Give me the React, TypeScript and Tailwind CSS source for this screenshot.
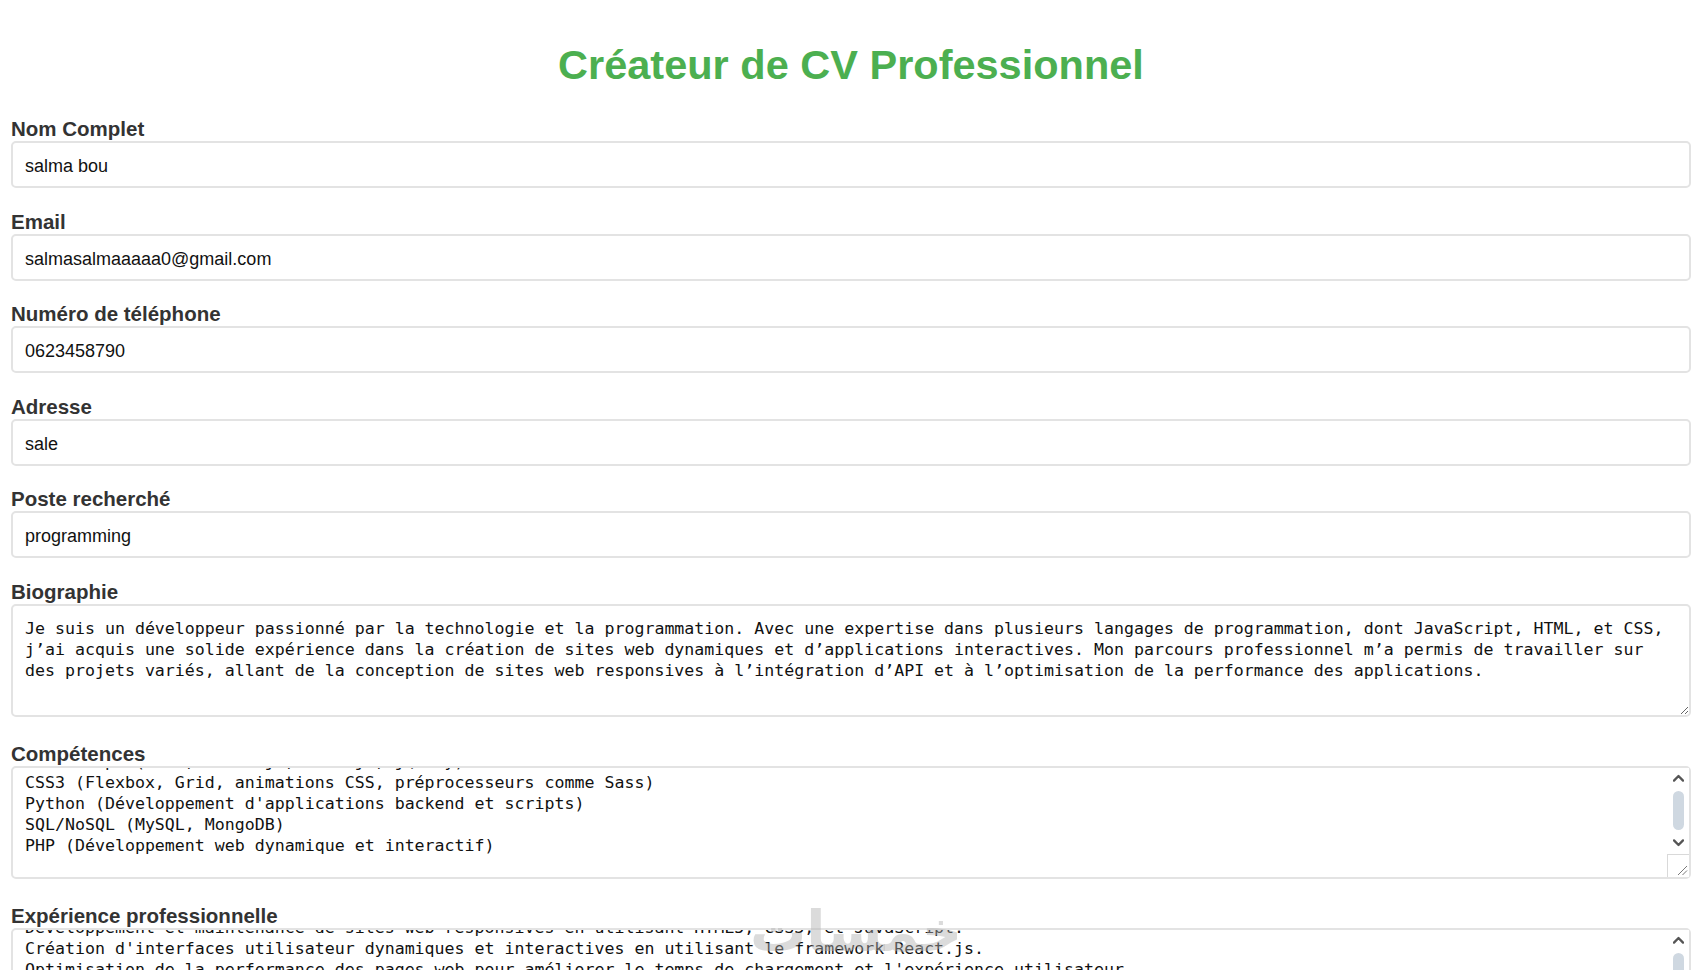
import { useEffect, useRef } from "react";

const bio = [
  "Je suis un développeur passionné par la technologie et la programmation. Avec une expertise dans plusieurs langages de programmation, dont JavaScript, HTML, et CSS,",
  "j’ai acquis une solide expérience dans la création de sites web dynamiques et d’applications interactives. Mon parcours professionnel m’a permis de travailler sur",
  "des projets variés, allant de la conception de sites web responsives à l’intégration d’API et à l’optimisation de la performance des applications.",
].join("\n");

const skills = [
  "HTML5 (Structure sémantique, formulaires, SEO)",
  "JavaScript (ES6+, React.js, Node.js, jQuery)",
  "CSS3 (Flexbox, Grid, animations CSS, préprocesseurs comme Sass)",
  "Python (Développement d'applications backend et scripts)",
  "SQL/NoSQL (MySQL, MongoDB)",
  "PHP (Développement web dynamique et interactif)",
  "",
].join("\n");

const experience = [
  "Développeur Web Front-End (2021 - Présent)",
  "Développement et maintenance de sites web responsives en utilisant HTML5, CSS3, et JavaScript.",
  "Création d'interfaces utilisateur dynamiques et interactives en utilisant le framework React.js.",
  "Optimisation de la performance des pages web pour améliorer le temps de chargement et l'expérience utilisateur.",
  "Intégration d'API REST et collaboration avec les équipes de design et de développement backend.",
  "Gestion de versions avec Git et déploiement continu des applications.",
  "",
  "Stagiaire Développeur Web (2020 - 2021)",
  "Participation à la réalisation de sites vitrines et de tableaux de bord en PHP et MySQL.",
  "Tests, correction de bugs et documentation technique des projets.",
].join("\n");

function ChevronUp() {
  return (
    <svg width="11" height="8" viewBox="0 0 11 8">
      <polyline points="1,6.6 5.5,2 10,6.6" fill="none" stroke="#555555" strokeWidth="2.3" strokeLinecap="round" strokeLinejoin="round" />
    </svg>
  );
}

function ChevronDown() {
  return (
    <svg width="11" height="8" viewBox="0 0 11 8">
      <polyline points="1,1.4 5.5,6 10,1.4" fill="none" stroke="#555555" strokeWidth="2.3" strokeLinecap="round" strokeLinejoin="round" />
    </svg>
  );
}

function FakeScrollbar() {
  return (
    <div className="pointer-events-none absolute right-[2px] top-[2px] bottom-[2px] flex w-[22px] flex-col bg-white">
      <div className="flex h-[21px] items-center justify-center">
        <ChevronUp />
      </div>
      <div className="flex-1 px-[5.5px] py-[2.5px]">
        <div className="h-full rounded-full bg-[#cfd8e1]" />
      </div>
      <div className="flex h-[21px] items-center justify-center">
        <ChevronDown />
      </div>
      <div className="relative h-[23px] border-l border-t border-[#d9d9d9] bg-white">
        <svg className="absolute bottom-[1px] right-[1px]" width="12" height="12" viewBox="0 0 12 12">
          <line x1="11" y1="2" x2="2" y2="11" stroke="#7a7a7a" strokeWidth="1" />
          <line x1="11" y1="6.5" x2="6.5" y2="11" stroke="#7a7a7a" strokeWidth="1" />
        </svg>
      </div>
    </div>
  );
}

function Label({ children }: { children: string }) {
  return (
    <label className="block pb-[2px] text-[20.5px] font-bold leading-[21px] text-[#333333]">{children}</label>
  );
}

function Field({ label, value }: { label: string; value: string }) {
  return (
    <div className="mb-[22.5px]">
      <Label>{label}</Label>
      <input
        readOnly
        value={value}
        className="block h-[47px] w-full rounded-[5px] border-2 border-[#e3e3e3] bg-white px-[12px] pt-[4px] text-[18px] text-[#111111] outline-none"
      />
    </div>
  );
}

function ScrolledArea({ label, value, scroll }: { label: string; value: string; scroll: number }) {
  const ref = useRef<HTMLTextAreaElement>(null);
  useEffect(() => {
    if (ref.current) ref.current.scrollTop = scroll;
  }, [scroll]);
  return (
    <div className="mb-[26px]">
      <Label>{label}</Label>
      <div className="relative">
        <textarea
          ref={ref}
          readOnly
          value={value}
          className="block h-[113px] w-full resize-none overflow-hidden whitespace-pre rounded-[5px] border-2 border-[#e3e3e3] bg-white p-[12px] font-['DejaVu_Sans_Mono','Liberation_Mono',monospace] text-[16.6px] leading-[21px] text-[#111111] outline-none"
        />
        <FakeScrollbar />
      </div>
    </div>
  );
}

export default function App() {
  return (
    <div className="relative min-h-screen bg-white pl-[11px] pr-[9px] font-['Liberation_Sans',Arial,sans-serif]">
      <h1 className="pb-[29px] pt-[41px] text-center text-[41.5px] font-bold leading-[48px] text-[#4caf50]">
        Créateur de CV Professionnel
      </h1>
      <Field label="Nom Complet" value="salma bou" />
      <Field label="Email" value="salmasalmaaaaa0@gmail.com" />
      <Field label="Numéro de téléphone" value="0623458790" />
      <Field label="Adresse" value="sale" />
      <Field label="Poste recherché" value="programming" />
      <div className="mb-[26px]">
        <Label>Biographie</Label>
        <textarea
          readOnly
          value={bio}
          className="block h-[113px] w-full rounded-[5px] border-2 border-[#e3e3e3] bg-white p-[12px] font-['DejaVu_Sans_Mono','Liberation_Mono',monospace] text-[16.6px] leading-[21px] text-[#111111] outline-none"
        />
      </div>
      <ScrolledArea label="Compétences" value={skills} scroll={50} />
      <ScrolledArea label="Expérience professionnelle" value={experience} scroll={46} />
      <div className="pointer-events-none absolute left-[750px] top-[900px] select-none font-['DejaVu_Sans',sans-serif] text-[56px] font-bold leading-[64px] text-[rgba(175,175,175,0.45)]">
        خمسات
      </div>
    </div>
  );
}
